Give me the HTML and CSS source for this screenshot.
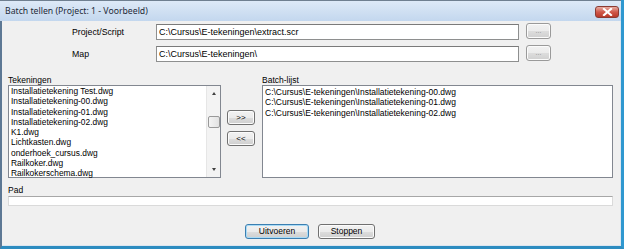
FILE: index.html
```html
<!DOCTYPE html>
<html lang="nl">
<head>
    <meta charset="UTF-8">
    <title>Batch tellen</title>
    <link rel="stylesheet" href="styles.css">
</head>
<body>
    <div class="window">
        <div class="titlebar">
            <span class="title">Batch tellen (Project: 1 - Voorbeeld)</span>
            <div class="close">
                <svg width="11" height="8" viewBox="0 0 11 8">
                    <path d="M2 1 L9 7 M9 1 L2 7" stroke="#fff" stroke-width="2.2" stroke-linecap="square"/>
                </svg>
            </div>
        </div>

        <div class="content">
            <div class="fields">
                <label>Project/Script</label>
                <div class="textbox">C:\Cursus\E-tekeningen\extract.scr</div>
                <button class="btn browse">...</button>

                <label>Map</label>
                <div class="textbox">C:\Cursus\E-tekeningen\</div>
                <button class="btn browse">...</button>
            </div>

            <div class="lists">
                <div class="col drawings">
                    <div class="caption">Tekeningen</div>
                    <div class="listbox">
                        <ul class="items">
                            <li>Installatietekening Test.dwg</li>
                            <li>Installatietekening-00.dwg</li>
                            <li>Installatietekening-01.dwg</li>
                            <li>Installatietekening-02.dwg</li>
                            <li>K1.dwg</li>
                            <li>Lichtkasten.dwg</li>
                            <li>onderhoek_cursus.dwg</li>
                            <li>Railkoker.dwg</li>
                            <li>Railkokerschema.dwg</li>
                        </ul>
                        <div class="scrollbar">
                            <span class="arrow up"></span>
                            <span class="thumb"></span>
                            <span class="arrow down"></span>
                        </div>
                    </div>
                </div>

                <div class="movers">
                    <button class="btn move">&gt;&gt;</button>
                    <button class="btn move">&lt;&lt;</button>
                </div>

                <div class="col batch">
                    <div class="caption">Batch-lijst</div>
                    <div class="listbox">
                        <ul class="items">
                            <li>C:\Cursus\E-tekeningen\Installatietekening-00.dwg</li>
                            <li>C:\Cursus\E-tekeningen\Installatietekening-01.dwg</li>
                            <li>C:\Cursus\E-tekeningen\Installatietekening-02.dwg</li>
                        </ul>
                    </div>
                </div>
            </div>

            <div class="pad">
                <div class="caption">Pad</div>
                <div class="textbox pad-box"></div>
            </div>

            <div class="actions">
                <button class="btn action default">Uitvoeren</button>
                <button class="btn action">Stoppen</button>
            </div>
        </div>
    </div>
</body>
</html>
```

FILE: styles.css
```css
body {
    margin: 0;
    font-family: "Liberation Sans", Arial, sans-serif;
    font-size: 8.5px;
    color: #000;
    background-color: #fff;
}

.window {
    width: 624px;
    height: 249px;
    box-sizing: border-box;
    display: flex;
    flex-direction: column;
    background: #c6d9ef;
    border-left: 2px solid #5d7894;
    border-right: 3px solid #2f98d0;
    border-bottom: 3px solid #2d8cc0;
}

.titlebar {
    height: 21px;
    box-sizing: border-box;
    display: flex;
    align-items: center;
    justify-content: space-between;
    padding: 0 2px 0 5px;
    border-top: 1px solid #6f7f90;
    background: linear-gradient(#dde9f7, #c3d7ee);
    margin-left: -2px;
}

.title {
    font-family: "Noto Sans", "DejaVu Sans", sans-serif;
    font-size: 8.7px;
    color: #1e2a38;
    margin-top: -1px;
}

.close {
    width: 24px;
    height: 12px;
    margin-top: 1px;
    display: flex;
    align-items: center;
    justify-content: center;
    box-sizing: border-box;
    border: 1px solid #8a3b33;
    border-radius: 3px;
    background: linear-gradient(#e6ada3, #d0584a 50%, #b93a2a);
}

.content {
    flex: 1;
    display: flex;
    flex-direction: column;
    padding: 0 7px 0 6px;
    background-color: #f0f0f0;
    border-right: 1px solid #dbe6f1;
    border-bottom: 1px solid #dbe6f1;
}

.fields {
    display: grid;
    grid-template-columns: 84px 363px 32px;
    grid-auto-rows: 17px;
    row-gap: 5px;
    margin: 2px 0 0 64px;
    align-items: center;
}

.fields label {
    font-size: 8.75px;
    margin-top: 1px;
}

.textbox {
    height: 16px;
    box-sizing: border-box;
    padding: 0 2px;
    line-height: 14px;
    font-size: 9px;
    background: #fff;
    border: 1px solid #8e8f8f;
    border-top-color: #7a7a7a;
    white-space: nowrap;
    align-self: end;
}

.btn {
    font-family: "Liberation Sans", Arial, sans-serif;
    font-size: 8.5px;
    color: #000;
    padding: 0;
    box-sizing: border-box;
    border: 1px solid #707070;
    border-radius: 3px;
    background: linear-gradient(#f2f2f2 0%, #ebebeb 50%, #dddddd 51%, #cfcfcf 100%);
    box-shadow: inset 0 0 0 1px #fbfbfb;
}

.browse {
    width: 25px;
    height: 16px;
    justify-self: end;
    align-self: start;
    color: #8a8a8a;
    font-size: 7px;
    line-height: 10px;
    border-color: #9a9a9a;
}

.lists {
    display: flex;
    gap: 6px;
    margin-top: 13px;
}

.col {
    display: flex;
    flex-direction: column;
}

.drawings {
    width: 213px;
}

.batch {
    flex: 1;
    margin-left: 1px;
}

.caption {
    height: 10px;
    line-height: 10px;
    font-size: 8.5px;
}

.listbox {
    height: 93px;
    box-sizing: border-box;
    display: flex;
    background: #fff;
    border: 1px solid #828790;
}

.items {
    flex: 1;
    list-style: none;
    margin: 0;
    padding: 0 0 0 2px;
}

.drawings .items {
    font-size: 8.4px;
}

.batch .items {
    padding-top: 1px;
}

.items li {
    height: 10.25px;
    line-height: 10.25px;
    white-space: nowrap;
}

.scrollbar {
    width: 13px;
    display: flex;
    flex-direction: column;
    align-items: center;
    background: #f3f3f3;
    border-left: 1px solid #e6e6e6;
}

.arrow {
    width: 0;
    height: 0;
    border-left: 2.5px solid transparent;
    border-right: 2.5px solid transparent;
}

.arrow.up {
    margin-top: 6px;
    border-bottom: 3px solid #404040;
}

.arrow.down {
    margin-top: auto;
    margin-bottom: 6px;
    border-top: 3px solid #404040;
}

.thumb {
    width: 12px;
    height: 12px;
    box-sizing: border-box;
    margin-top: 21px;
    border: 1px solid #999;
    border-radius: 2px;
    background: linear-gradient(90deg, #f4f4f4, #e2e2e2);
}

.movers {
    width: 28px;
    display: flex;
    flex-direction: column;
    gap: 6px;
    padding-top: 35px;
}

.move {
    height: 15px;
    font-size: 8px;
    line-height: 12px;
}

.pad {
    display: flex;
    flex-direction: column;
    margin-top: 7px;
}

.pad .caption {
    height: 11px;
}

.pad-box {
    height: 10px;
    align-self: stretch;
    border-color: #dadada;
    border-top-color: #a7a7a7;
}

.actions {
    display: flex;
    justify-content: center;
    gap: 9px;
    margin-top: 18px;
    padding-right: 1px;
}

.action {
    height: 15px;
    line-height: 13px;
    font-size: 8.5px;
}

.action.default {
    width: 64px;
    border-color: #3c7fb1;
    box-shadow: inset 0 0 0 1px #a9dbf6;
}

.action:not(.default) {
    width: 57px;
}
```
